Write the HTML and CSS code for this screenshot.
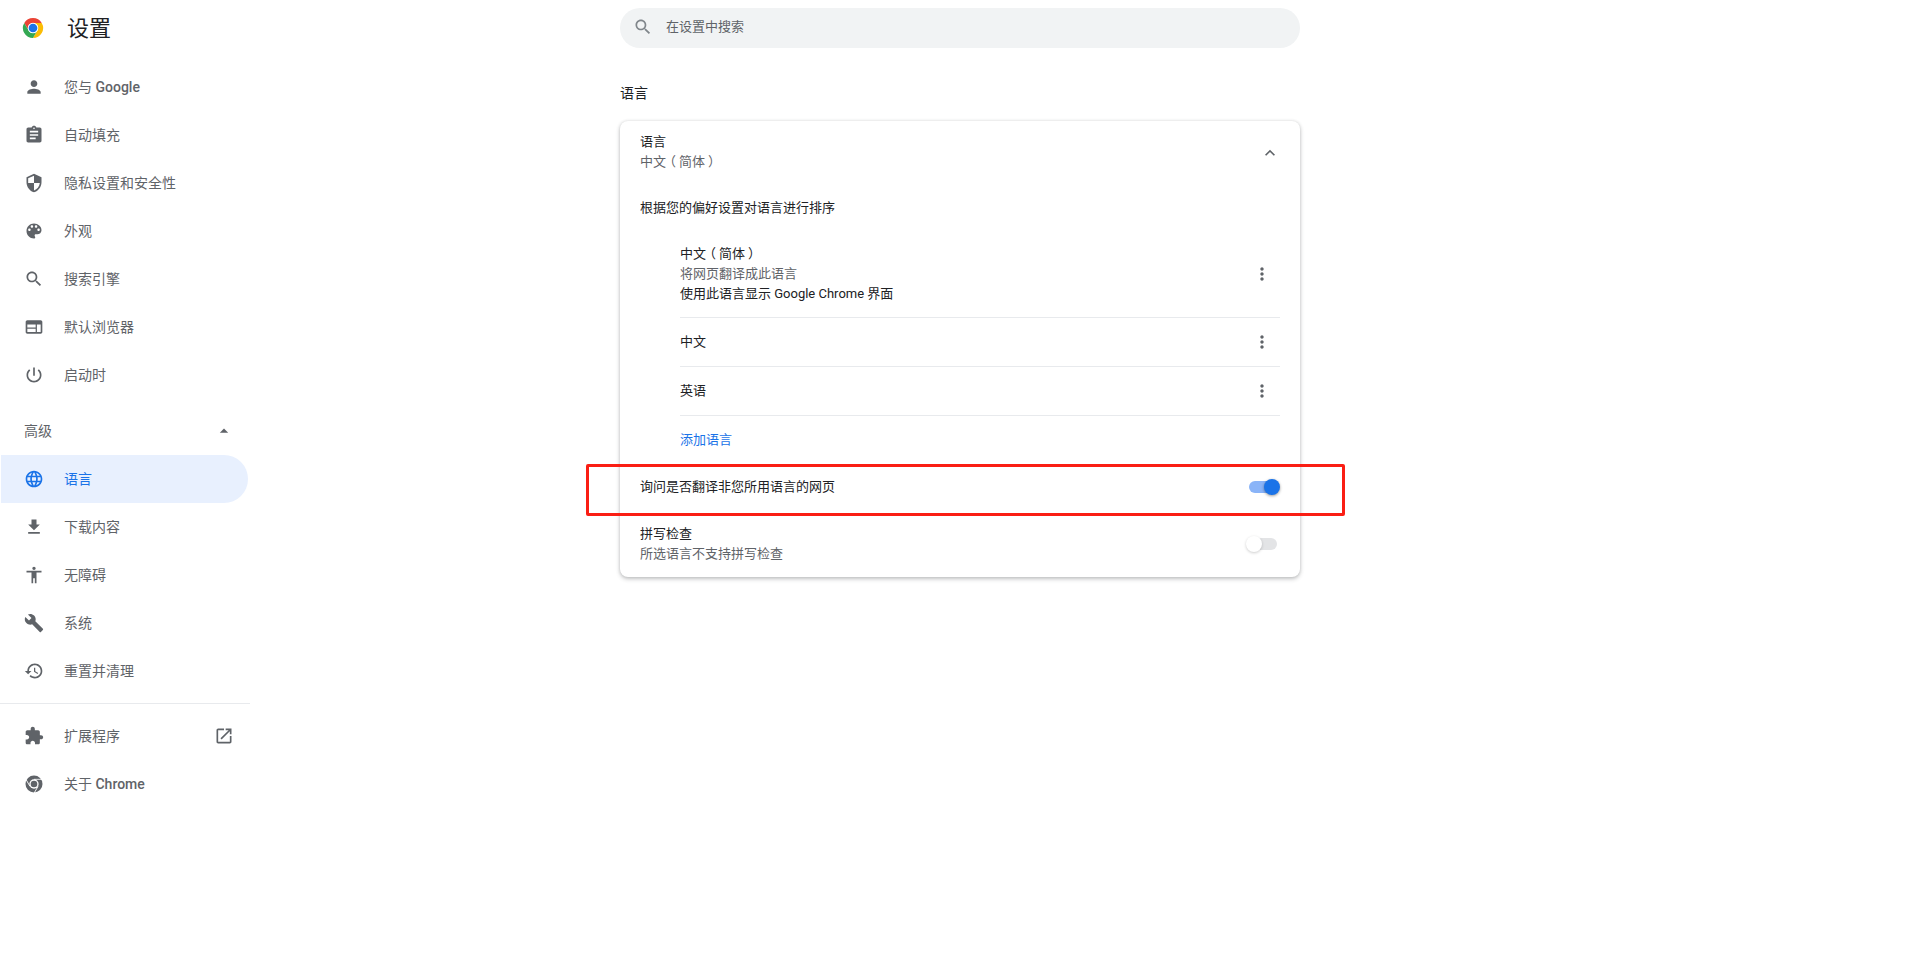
FILE: index.html
```html
<!DOCTYPE html>
<html lang="zh-CN">
<head>
    <meta charset="UTF-8">
    <title>设置 - 语言</title>
    <link rel="stylesheet" href="styles.css">
</head>
<body>
    <div class="page">
        <aside class="sidebar">
            <div class="brand">
                <svg class="logo" viewBox="0 0 48 48">
                    <path fill="#ea4335" d="M24 2A22 22 0 0 1 43.05 13H24A11 11 0 0 0 14.47 29.5L4.95 13A22 22 0 0 1 24 2z"/>
                    <path fill="#fbbc05" transform="rotate(120 24 24)" d="M24 2A22 22 0 0 1 43.05 13H24A11 11 0 0 0 14.47 29.5L4.95 13A22 22 0 0 1 24 2z"/>
                    <path fill="#34a853" transform="rotate(240 24 24)" d="M24 2A22 22 0 0 1 43.05 13H24A11 11 0 0 0 14.47 29.5L4.95 13A22 22 0 0 1 24 2z"/>
                    <circle cx="24" cy="24" r="11.5" fill="#fff"/>
                    <circle cx="24" cy="24" r="9.5" fill="#1a73e8"/>
                </svg>
                <h1>设置</h1>
            </div>

            <nav>
                <a class="nav-item">
                    <svg class="icon" viewBox="0 0 24 24"><path d="M12 12c2.21 0 4-1.79 4-4s-1.79-4-4-4-4 1.79-4 4 1.79 4 4 4zm0 2c-2.67 0-8 1.34-8 4v2h16v-2c0-2.66-5.33-4-8-4z"/></svg>
                    <span>您与 <b>Google</b></span>
                </a>
                <a class="nav-item">
                    <svg class="icon" viewBox="0 0 24 24"><path d="M19 3h-4.18C14.4 1.84 13.3 1 12 1c-1.3 0-2.4.84-2.82 2H5c-1.1 0-2 .9-2 2v14c0 1.1.9 2 2 2h14c1.1 0 2-.9 2-2V5c0-1.1-.9-2-2-2zm-7 0c.55 0 1 .45 1 1s-.45 1-1 1-1-.45-1-1 .45-1 1-1zm2 14H7v-2h7v2zm3-4H7v-2h10v2zm0-4H7V7h10v2z"/></svg>
                    <span>自动填充</span>
                </a>
                <a class="nav-item">
                    <svg class="icon" viewBox="0 0 24 24"><path d="M12 1L3 5v6c0 5.55 3.84 10.74 9 12 5.16-1.26 9-6.45 9-12V5l-9-4zm0 10.99h7c-.53 4.12-3.28 7.79-7 8.94V12H5V6.3l7-3.11v8.8z"/></svg>
                    <span>隐私设置和安全性</span>
                </a>
                <a class="nav-item">
                    <svg class="icon" viewBox="0 0 24 24"><path d="M12 3c-4.97 0-9 4.03-9 9s4.03 9 9 9c.83 0 1.5-.67 1.5-1.5 0-.39-.15-.74-.39-1.01-.23-.26-.38-.61-.38-.99 0-.83.67-1.5 1.5-1.5H16c2.76 0 5-2.24 5-5 0-4.42-4.03-8-9-8zm-5.5 9c-.83 0-1.5-.67-1.5-1.5S5.67 9 6.5 9 8 9.67 8 10.5 7.33 12 6.5 12zm3-4C8.67 8 8 7.33 8 6.5S8.67 5 9.5 5s1.5.67 1.5 1.5S10.33 8 9.5 8zm5 0c-.83 0-1.5-.67-1.5-1.5S13.67 5 14.5 5s1.5.67 1.5 1.5S15.33 8 14.5 8zm3 4c-.83 0-1.5-.67-1.5-1.5S16.67 9 17.5 9s1.5.67 1.5 1.5-.67 1.5-1.5 1.5z"/></svg>
                    <span>外观</span>
                </a>
                <a class="nav-item">
                    <svg class="icon" viewBox="0 0 24 24"><path d="M15.5 14h-.79l-.28-.27C15.41 12.59 16 11.11 16 9.5 16 5.91 13.09 3 9.5 3S3 5.91 3 9.5 5.91 16 9.5 16c1.61 0 3.09-.59 4.23-1.57l.27.28v.79l5 4.99L20.49 19l-4.99-5zm-6 0C7.01 14 5 11.99 5 9.5S7.01 5 9.5 5 14 7.01 14 9.5 11.99 14 9.5 14z"/></svg>
                    <span>搜索引擎</span>
                </a>
                <a class="nav-item">
                    <svg class="icon" viewBox="0 0 24 24"><path fill-rule="evenodd" d="M20 4H4c-1.1 0-2 .9-2 2v12c0 1.1.9 2 2 2h16c1.1 0 2-.9 2-2V6c0-1.1-.9-2-2-2zM4 9h10v3.5H4V9zm0 5h10v4H4v-4zm11.5-5H20v9h-4.5V9z"/></svg>
                    <span>默认浏览器</span>
                </a>
                <a class="nav-item">
                    <svg class="icon" viewBox="0 0 24 24"><path d="M13 3h-2v10h2V3zm4.83 2.17l-1.42 1.42C17.99 7.86 19 9.81 19 12c0 3.87-3.13 7-7 7s-7-3.13-7-7c0-2.19 1.01-4.14 2.58-5.42L6.17 5.17C4.23 6.82 3 9.26 3 12c0 4.97 4.03 9 9 9s9-4.03 9-9c0-2.74-1.23-5.18-3.17-6.83z"/></svg>
                    <span>启动时</span>
                </a>

                <div class="nav-advanced">
                    <span>高级</span>
                    <svg class="icon-small" viewBox="0 0 24 24"><path d="M7 14l5-5 5 5z"/></svg>
                </div>

                <a class="nav-item active">
                    <svg class="icon" viewBox="0 0 24 24"><path d="M11.99 2C6.47 2 2 6.48 2 12s4.47 10 9.99 10C17.52 22 22 17.52 22 12S17.52 2 11.99 2zm6.93 6h-2.95c-.32-1.25-.78-2.45-1.38-3.56 1.84.63 3.37 1.91 4.33 3.56zM12 4.04c.83 1.2 1.48 2.53 1.91 3.96h-3.82c.43-1.43 1.08-2.76 1.91-3.96zM4.26 14C4.1 13.36 4 12.69 4 12s.1-1.36.26-2h3.38c-.08.66-.14 1.32-.14 2 0 .68.06 1.34.14 2H4.26zm.82 2h2.95c.32 1.25.78 2.45 1.38 3.56-1.84-.63-3.37-1.9-4.33-3.56zm2.95-8H5.08c.96-1.66 2.49-2.93 4.33-3.56C8.81 5.55 8.35 6.75 8.03 8zM12 19.96c-.83-1.2-1.48-2.53-1.91-3.96h3.82c-.43 1.43-1.08 2.76-1.91 3.96zM14.34 14H9.66c-.09-.66-.16-1.32-.16-2 0-.68.07-1.35.16-2h4.68c.09.65.16 1.32.16 2 0 .68-.07 1.34-.16 2zm.25 5.56c.6-1.11 1.06-2.31 1.38-3.56h2.95c-.96 1.65-2.49 2.93-4.33 3.56zM16.36 14c.08-.66.14-1.32.14-2 0-.68-.06-1.34-.14-2h3.38c.16.64.26 1.31.26 2s-.1 1.36-.26 2h-3.38z"/></svg>
                    <span>语言</span>
                </a>
                <a class="nav-item">
                    <svg class="icon" viewBox="0 0 24 24"><path d="M19 9h-4V3H9v6H5l7 7 7-7zM5 18v2h14v-2H5z"/></svg>
                    <span>下载内容</span>
                </a>
                <a class="nav-item">
                    <svg class="icon" viewBox="0 0 24 24"><path d="M12 2c1.1 0 2 .9 2 2s-.9 2-2 2-2-.9-2-2 .9-2 2-2zm9 7h-6v13h-2v-6h-2v6H9V9H3V7h18v2z"/></svg>
                    <span>无障碍</span>
                </a>
                <a class="nav-item">
                    <svg class="icon" viewBox="0 0 24 24"><path d="M22.7 19l-9.1-9.1c.9-2.3.4-5-1.5-6.9-2-2-5-2.4-7.4-1.3L9 6 6 9 1.6 4.7C.4 7.1.9 10.1 2.9 12.1c1.9 1.9 4.6 2.4 6.9 1.5l9.1 9.1c.4.4 1 .4 1.4 0l2.3-2.3c.5-.4.5-1.1.1-1.4z"/></svg>
                    <span>系统</span>
                </a>
                <a class="nav-item">
                    <svg class="icon" viewBox="0 0 24 24"><path d="M13 3c-4.97 0-9 4.03-9 9H1l3.89 3.89.07.14L9 12H6c0-3.87 3.13-7 7-7s7 3.13 7 7-3.13 7-7 7c-1.93 0-3.68-.79-4.94-2.06l-1.42 1.42C8.27 19.99 10.51 21 13 21c4.97 0 9-4.03 9-9s-4.03-9-9-9zm-1 5v5l4.28 2.54.72-1.21-3.5-2.08V8H12z"/></svg>
                    <span>重置并清理</span>
                </a>

                <hr class="nav-divider">

                <a class="nav-item">
                    <svg class="icon" viewBox="0 0 24 24"><path d="M20.5 11H19V7c0-1.1-.9-2-2-2h-4V3.5C13 2.12 11.88 1 10.5 1S8 2.12 8 3.5V5H4c-1.1 0-1.99.9-1.99 2v3.8H3.5c1.49 0 2.7 1.21 2.7 2.7s-1.21 2.7-2.7 2.7H2V20c0 1.1.9 2 2 2h3.8v-1.5c0-1.49 1.21-2.7 2.7-2.7 1.49 0 2.7 1.21 2.7 2.7V22H17c1.1 0 2-.9 2-2v-4h1.5c1.38 0 2.5-1.12 2.5-2.5S21.88 11 20.5 11z"/></svg>
                    <span>扩展程序</span>
                    <svg class="icon-external" viewBox="0 0 24 24"><path d="M19 19H5V5h7V3H5c-1.11 0-2 .9-2 2v14c0 1.1.89 2 2 2h14c1.1 0 2-.9 2-2v-7h-2v7zM14 3v2h3.59l-9.83 9.83 1.41 1.41L19 6.41V10h2V3h-7z"/></svg>
                </a>
                <a class="nav-item">
                    <svg class="icon" viewBox="0 0 24 24">
                        <circle cx="12" cy="12" r="10.2"/>
                        <circle cx="12" cy="12" r="5.6" fill="#fff"/>
                        <circle cx="12" cy="12" r="4"/>
                        <g stroke="#fff" stroke-width="1">
                            <path d="M12 6.4H22"/>
                            <path transform="rotate(120 12 12)" d="M12 6.4H22"/>
                            <path transform="rotate(240 12 12)" d="M12 6.4H22"/>
                        </g>
                    </svg>
                    <span>关于 <b>Chrome</b></span>
                </a>
            </nav>
        </aside>

        <main class="content">
            <div class="search">
                <svg class="search-icon" viewBox="0 0 24 24"><path d="M15.5 14h-.79l-.28-.27C15.41 12.59 16 11.11 16 9.5 16 5.91 13.09 3 9.5 3S3 5.91 3 9.5 5.91 16 9.5 16c1.61 0 3.09-.59 4.23-1.57l.27.28v.79l5 4.99L20.49 19l-4.99-5zm-6 0C7.01 14 5 11.99 5 9.5S7.01 5 9.5 5 14 7.01 14 9.5 11.99 14 9.5 14z"/></svg>
                <span>在设置中搜索</span>
            </div>

            <h2>语言</h2>

            <section class="card">
                <div class="card-header">
                    <div>
                        <p>语言</p>
                        <p class="secondary">中文<span class="paren-open">（</span>简体<span class="paren-close">）</span></p>
                    </div>
                    <svg class="chevron" viewBox="0 0 24 24"><path d="M12 8l-6 6 1.41 1.41L12 10.83l4.59 4.58L18 14z"/></svg>
                </div>

                <p class="order-hint">根据您的偏好设置对语言进行排序</p>

                <div class="lang-list">
                    <div class="lang-row lang-row-first">
                        <div>
                            <p>中文<span class="paren-open">（</span>简体<span class="paren-close">）</span></p>
                            <p class="secondary">将网页翻译成此语言</p>
                            <p>使用此语言显示 Google Chrome 界面</p>
                        </div>
                        <svg class="more" viewBox="0 0 24 24"><path d="M12 8c1.1 0 2-.9 2-2s-.9-2-2-2-2 .9-2 2 .9 2 2 2zm0 2c-1.1 0-2 .9-2 2s.9 2 2 2 2-.9 2-2-.9-2-2-2zm0 6c-1.1 0-2 .9-2 2s.9 2 2 2 2-.9 2-2-.9-2-2-2z"/></svg>
                    </div>
                    <div class="lang-row">
                        <p>中文</p>
                        <svg class="more" viewBox="0 0 24 24"><path d="M12 8c1.1 0 2-.9 2-2s-.9-2-2-2-2 .9-2 2 .9 2 2 2zm0 2c-1.1 0-2 .9-2 2s.9 2 2 2 2-.9 2-2-.9-2-2-2zm0 6c-1.1 0-2 .9-2 2s.9 2 2 2 2-.9 2-2-.9-2-2-2z"/></svg>
                    </div>
                    <div class="lang-row">
                        <p>英语</p>
                        <svg class="more" viewBox="0 0 24 24"><path d="M12 8c1.1 0 2-.9 2-2s-.9-2-2-2-2 .9-2 2 .9 2 2 2zm0 2c-1.1 0-2 .9-2 2s.9 2 2 2 2-.9 2-2-.9-2-2-2zm0 6c-1.1 0-2 .9-2 2s.9 2 2 2 2-.9 2-2-.9-2-2-2z"/></svg>
                    </div>
                    <a class="add-lang">添加语言</a>
                </div>

                <div class="setting-row">
                    <p>询问是否翻译非您所用语言的网页</p>
                    <span class="toggle on"></span>
                </div>

                <div class="setting-row setting-row-tall">
                    <div>
                        <p>拼写检查</p>
                        <p class="secondary">所选语言不支持拼写检查</p>
                    </div>
                    <span class="toggle"></span>
                </div>

                <div class="highlight"></div>
            </section>
        </main>
    </div>
</body>
</html>
```

FILE: styles.css
```css
/* General Styling */
* {
    box-sizing: border-box;
    margin: 0;
    padding: 0;
}

body {
    background: white;
    color: #202124;
    font-family: Roboto, 'Noto Sans CJK SC', sans-serif;
    font-size: 13px;
    line-height: 20px;
}

.page {
    display: grid;
    grid-template-columns: 1fr 680px 1fr;
    min-height: 100vh;
}

/* Sidebar */
.sidebar {
    width: 250px;
}

.brand {
    display: flex;
    align-items: center;
    height: 63px;
    padding: 0 0 7px 22px;
}

.logo {
    width: 22px;
    height: 22px;
}

.brand h1 {
    margin: 2px 0 0 23px;
    font-size: 22px;
    font-weight: 400;
    line-height: 30px;
}

.nav-item {
    display: flex;
    align-items: center;
    width: 248px;
    height: 48px;
    padding-left: 24px;
    color: #5f6368;
    font-size: 14px;
}

.nav-item b {
    font-weight: 500;
}

.nav-item .icon {
    width: 20px;
    height: 20px;
    margin-right: 20px;
    fill: #5f6368;
}

.nav-item.active {
    margin-left: 1px;
    width: 247px;
    padding-left: 23px;
    background: #e8f0fe;
    border-radius: 0 24px 24px 0;
    color: #1a73e8;
}

.nav-item.active .icon {
    fill: #1a73e8;
}

.nav-advanced {
    display: flex;
    align-items: center;
    justify-content: space-between;
    width: 248px;
    height: 48px;
    margin-top: 8px;
    padding: 0 14px 0 24px;
    color: #5f6368;
    font-size: 14px;
}

.icon-small {
    width: 20px;
    height: 20px;
    fill: #5f6368;
}

.nav-divider {
    width: 250px;
    margin: 8px 0;
    border: none;
    border-top: 1px solid #e8eaed;
}

.icon-external {
    width: 20px;
    height: 20px;
    margin-left: auto;
    margin-right: 14px;
    fill: #5f6368;
}

/* Main column */
.content {
    grid-column: 2;
    padding-top: 8px;
}

.search {
    display: flex;
    align-items: center;
    height: 40px;
    padding: 0 0 2px 13px;
    background: #f1f3f4;
    border-radius: 20px;
    color: #5f6368;
}

.search-icon {
    width: 20px;
    height: 20px;
    margin-right: 13px;
    fill: #80868b;
}

h2 {
    margin-top: 35px;
    margin-bottom: 18px;
    font-size: 14px;
    font-weight: 400;
}

/* Card */
.card {
    position: relative;
    height: 456px;
    background: white;
    border-radius: 8px;
    box-shadow: 0 2px 4px rgba(60, 64, 67, 0.3), 0 0 3px rgba(60, 64, 67, 0.15);
}

.secondary {
    color: #5f6368;
}

/* the brackets sit in the middle of their box in the reference */
.paren-open,
.paren-close {
    display: inline-block;
}

.paren-open {
    transform: translateX(-3px);
}

.paren-close {
    transform: translateX(3px);
}

.card-header {
    display: flex;
    align-items: flex-start;
    justify-content: space-between;
    height: 77px;
    padding: 11px 20px 0;
}

.chevron {
    width: 20px;
    height: 20px;
    margin-top: 11px;
    fill: #5f6368;
}

.order-hint {
    padding-left: 20px;
}

.lang-list {
    margin: 7px 20px 0 60px;
}

.lang-row {
    display: flex;
    align-items: center;
    justify-content: space-between;
    height: 49px;
    border-bottom: 1px solid #e8eaed;
}

.lang-row-first {
    height: 93px;
    padding-top: 6px;
}

.more {
    width: 20px;
    height: 20px;
    margin-right: 8px;
    fill: #5f6368;
}

.add-lang {
    display: flex;
    align-items: center;
    height: 47px;
    color: #1a73e8;
}

.setting-row {
    display: flex;
    align-items: center;
    justify-content: space-between;
    height: 48px;
    padding: 0 23px 0 20px;
}

.setting-row-tall {
    height: 65px;
}

/* Toggle */
.toggle {
    position: relative;
    width: 28px;
    height: 12px;
    background: #e3e4e6;
    border-radius: 6px;
}

.toggle::after {
    content: "";
    position: absolute;
    top: -2px;
    left: -3px;
    width: 16px;
    height: 16px;
    background: white;
    border-radius: 50%;
    box-shadow: 0 1px 3px rgba(0, 0, 0, 0.2);
}

.toggle.on {
    background: #8ab4f8;
}

.toggle.on::after {
    left: 15px;
    background: #1a73e8;
    box-shadow: 0 1px 3px rgba(0, 0, 0, 0.4);
}

/* Red highlight over the translate row */
.highlight {
    position: absolute;
    top: 343px;
    left: -34px;
    width: 759px;
    height: 52px;
    border: 3px solid #fa1e14;
    border-radius: 2px;
}
```
